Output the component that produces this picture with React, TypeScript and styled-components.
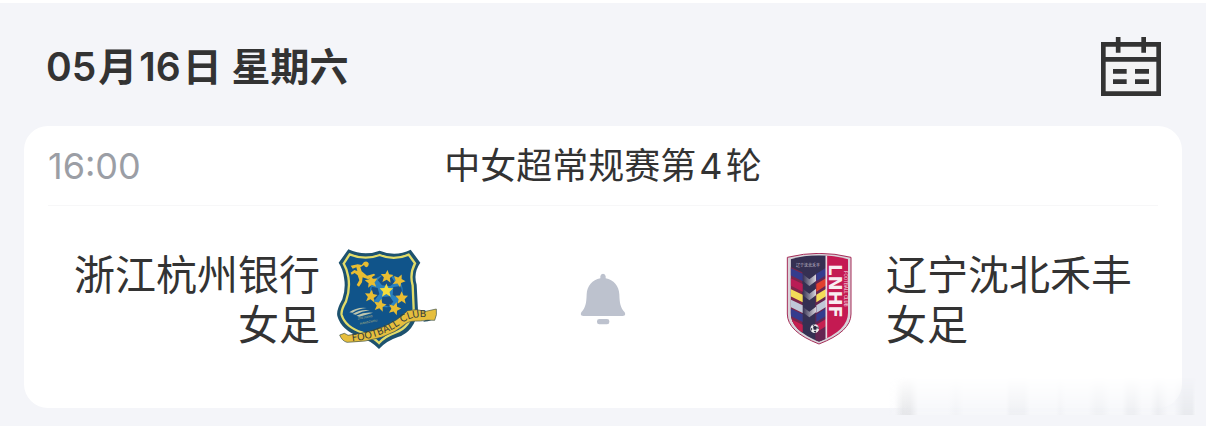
import React from "react";
import styled, { createGlobalStyle } from "styled-components";

const GlobalStyle = createGlobalStyle`
  * { box-sizing: border-box; }
  body {
    margin: 0;
    background: #f4f5f9;
    color: #333333;
    font-family: Inter, "Noto Sans CJK SC", sans-serif;
  }
`;

const Page = styled.main`
  position: relative;
  border-top: 3px solid #ffffff;
  padding: 0 24px 18px;
`;

const DayHeader = styled.header`
  display: flex;
  align-items: center;
  justify-content: space-between;
  height: 123px;
  padding: 4px 21px 0 20px;
`;

const DayTitle = styled.h1`
  margin: 0;
  font-size: 39px;
  line-height: 50px;
  font-weight: 600;
`;

const Numeral = styled.span<{ $gap: number }>`
  margin: 0 ${(p) => p.$gap}px;
`;

const IconButton = styled.button`
  display: flex;
  padding: 0;
  border: 0;
  background: none;
  cursor: pointer;
`;

const MatchCard = styled.section`
  padding: 0 24px;
  border-radius: 24px;
  background: #ffffff;
`;

const MatchInfo = styled.div`
  display: grid;
  grid-template-columns: 1fr auto 1fr;
  align-items: center;
  height: 80px;
  border-bottom: 1px solid #f7f7f8;
`;

const Kickoff = styled.time`
  font-size: 36px;
  line-height: 50px;
  color: #9b9ea5;
`;

const Competition = styled.h2`
  margin: 0;
  font-size: 36px;
  line-height: 50px;
  font-weight: 400;
`;

const Teams = styled.div`
  display: grid;
  grid-template-columns: 1fr 102px 330px 102px 1fr;
  align-items: center;
  justify-items: center;
  height: 202px;
  padding-bottom: 16px;
`;

const TeamName = styled.p<{ $side: "home" | "away" }>`
  width: 100%;
  margin: 0;
  padding: ${(p) => (p.$side === "home" ? "2px 16px 0 0" : "2px 0 0 16px")};
  text-align: ${(p) => (p.$side === "home" ? "right" : "left")};
  font-size: 41px;
  line-height: 50px;
`;

const Watermark = styled.div`
  position: absolute;
  right: 10px;
  bottom: 11px;
  width: 308px;
  height: 38px;
  background:
    linear-gradient(to right, transparent 0 7px, #d3d4d777 15px 22px, transparent 30px 60px, #e6e8ec44 68px, transparent 76px 118px, #e0e2e755 122px 136px, transparent 142px 168px, #e6e8ec44 172px, transparent 178px 200px, #e4e6ea55 208px 214px, transparent 222px 234px, #e0e2e666 240px 246px, transparent 254px 262px, #dcdee366 270px, transparent 280px 286px, #d8dbe077 296px 304px, transparent),
    linear-gradient(to right, transparent, #f6f7fa 20px);
  mask-image: linear-gradient(transparent, #000);
`;

const CalendarIcon = () => (
  <svg width="60" height="59" viewBox="0 0 180 177" aria-hidden="true">
    <path d="M7 22H173V170H7Z" fill="#f3f3f4" stroke="#333" strokeWidth="14" />
    <path
      d="M6 67H174M51.500 0V47M128 0V47M36 103H77M102 103H144M36 134H77M102 134H144"
      fill="none"
      stroke="#333"
      strokeWidth="14"
    />
  </svg>
);

const BellIcon = () => (
  <svg width="46" height="52" viewBox="30 24 138 156" aria-hidden="true">
    <path
      d="M91 40V34Q92 26 99 26Q106 26 107 34V40C131 44 147 63 148 88C149 116 151 127 164 142Q169 153 158 153H40Q29 153 34 142C47 127 49 116 50 88C51 63 67 44 91 40Z"
      fill="#bdc2ce"
    />
    <rect x="81" y="162" width="37" height="16" rx="7" fill="#bdc2ce" />
  </svg>
);

const STAR = "M0 -17L5 -6L17 -5L8 4L11 16L0 9L-11 16L-8 4L-17 -5L-5 -6Z";
const SMALL_STARS = [
  [186, 109, 5],
  [222, 121, 25],
  [139, 124, -8],
  [138, 168, 8],
  [165, 195, 12],
  [209, 205, 18],
  [230, 173, 0],
];

const HangzhouCrest = () => (
  <svg width="102" height="102" viewBox="33 24 306 306" role="img" aria-label="浙江杭州银行女足">
    <path
      d="M70 28Q118 50 164 32Q211 52 257 29L286 68Q264 99 275 134L279 212Q268 275 219 291Q183 303 162 327Q139 303 105 291Q49 271 37 228Q33 211 52 178Q63 145 57 113Q54 88 41 68Z"
      fill="#1d526f"
    />
    <path
      d="M74 43Q120 62 164 45Q207 63 251 44L270 70Q253 102 263 136L266 207Q256 262 211 278Q180 289 162 309Q141 289 112 278Q61 261 50 225Q47 212 63 184Q76 148 70 111Q66 87 56 71Z"
      fill="#10548a"
      stroke="#e2dc69"
      strokeWidth="7"
    />
    <circle cx="184" cy="153" r="49" fill="#2b82c0" />
    <path
      d="M173 105L195 105L210 127L195 139L171 136L158 120ZM140 140L158 144L163 162L150 180L137 168ZM205 141L228 138L232 159L219 173L203 164ZM172 171L194 169L205 185L191 200L169 192Z"
      fill="#164f86"
    />
    <path d={STAR} transform="translate(184 151) scale(1.2)" fill="#f3dc3d" />
    {SMALL_STARS.map(([x, y, angle]) => (
      <path key={`${x}-${y}`} d={STAR} transform={`translate(${x} ${y}) rotate(${angle}) scale(1.12)`} fill="#e8bd32" />
    ))}
    <path
      d="M117 66Q127 62 131 70Q132 79 124 82Q119 80 117 75L106 82L110 94L126 107L147 101L151 105L130 118L113 112L111 127L102 140L95 135L103 121L98 106L89 99L80 104L77 98L88 90L97 93L94 82L83 86L77 77L98 73L110 75Z"
      fill="#e8bd32"
    />
    <path d="M73 217Q96 200 125 204Q101 206 83 218ZM83 222Q107 207 134 211Q110 214 92 224ZM94 227Q118 215 144 218L103 230Z" fill="#bec6ad" />
    <g fill="#8b9c83" fontFamily="Inter, sans-serif" fontSize="9" fontStyle="italic" fontWeight="600">
      <text x="98" y="239" transform="rotate(-10 98 239)">ZHEJIANG</text>
      <text x="105" y="254" transform="rotate(-10 105 254)">HANGZHOU</text>
    </g>
    <path d="M286 242L330 227Q327 244 294 245L319 228L301 218Z" fill="#164763" />
    <path
      d="M44 285L58 280Q65 283 69 286Q188 273 248 212Q275 205 302 214L334 207Q337 224 329 241Q308 239 286 243Q255 242 244 250Q181 306 66 307Q51 303 44 285Z"
      fill="#e6be3d"
      stroke="#3c5148"
      strokeWidth="2"
    />
    <path id="ribbon-line" d="M82 304Q177 293 239 244Q268 227 316 232" fill="none" />
    <text fill="#38413c" fontFamily="'DejaVu Sans', sans-serif" fontSize="29">
      <textPath href="#ribbon-line">FOOTBALL CLUB</textPath>
    </text>
  </svg>
);

const CHEVRONS = [
  [68, "#343c8d", "#343c8d"],
  [99, "#b91c55", "#e0402f"],
  [131, "#f3dc58", "#f3dc58"],
  [163, "#c0c8d8", "#c0c8d8"],
  [190, "#343c8d", "#343c8d"],
  [221, "#c52050", "#c52050"],
] as const;

const ShenbeiCrest = () => (
  <svg width="66" height="92" viewBox="36 24 198 276" role="img" aria-label="辽宁沈北禾丰女足">
    <defs>
      <clipPath id="shield-field">
        <path d="M50 43Q89 31 135 31Q181 31 222 43V204Q222 256 135 290Q50 256 50 204Z" />
      </clipPath>
      <linearGradient id="silver">
        <stop stopColor="#fff" stopOpacity="0" />
        <stop offset="1" stopColor="#fff" stopOpacity=".8" />
      </linearGradient>
    </defs>
    <path
      d="M40 37Q89 25 135 25Q183 25 231 37V207Q231 260 135 297Q40 260 40 207Z"
      fill="#d9d4da"
      stroke="#a62c58"
      strokeWidth="3"
    />
    <g clipPath="url(#shield-field)">
      <path d="M48 28H157V292H48Z" fill="#353052" />
      <path d="M48 65L85 82V280L48 252Z" fill="#7c254a" />
      <path d="M124 90L155 68V292H124Z" fill="#652551" />
      {CHEVRONS.map(([y, left, right]) => (
        <React.Fragment key={y}>
          <path d={`M48 ${y}L86 ${y + 18}V${y + 41}L48 ${y + 22}Z`} fill={left} />
          <path d={`M127 ${y + 18}L157 ${y}V${y + 22}L127 ${y + 41}Z`} fill={right} />
        </React.Fragment>
      ))}
      <path
        d="M86 87L106 103L126 88V108L106 123L86 107ZM86 131L106 146L126 131V151L106 166L86 151ZM86 185L106 200L126 185V202L106 217L86 202Z"
        fill="url(#silver)"
      />
      <path d="M157 28H226V280H157Z" fill="#c41a52" />
      <path d="M157 28V292" stroke="#e9d7df" strokeWidth="5" />
    </g>
    <text x="66" y="67" fill="#cdc4d2" fontFamily="'Noto Sans CJK SC', sans-serif" fontSize="12">辽宁沈北禾丰</text>
    <text
      transform="translate(166 57) rotate(90)"
      fill="#f8edf1"
      fontFamily="'DejaVu Sans', sans-serif"
      fontSize="54"
      fontWeight="700"
    >
      LNHF
    </text>
    <text
      transform="translate(209 78) rotate(90)"
      fill="#eab7c8"
      fontFamily="Inter, sans-serif"
      fontSize="13"
      fontWeight="600"
    >
      FOOTBALL CLUB
    </text>
    <circle cx="122" cy="251" r="13" fill="#eeeeef" />
    <path
      d="M117 245L123 242L129 246L127 254H119ZM110 248L115 251L113 258ZM132 243L135 252L129 250ZM119 258L127 257L124 264ZM115 240L123 238L119 243Z"
      fill="#26253b"
    />
  </svg>
);

export default function App() {
  return (
    <>
      <GlobalStyle />
      <Page>
        <DayHeader>
          <DayTitle>
            <Numeral $gap={2}>05</Numeral>月<Numeral $gap={2}>16</Numeral>日 星期六
          </DayTitle>
          <IconButton type="button" aria-label="日历">
            <CalendarIcon />
          </IconButton>
        </DayHeader>
        <MatchCard>
          <MatchInfo>
            <Kickoff>16:00</Kickoff>
            <Competition>
              中女超常规赛第<Numeral $gap={3}>4</Numeral>轮
            </Competition>
          </MatchInfo>
          <Teams>
            <TeamName $side="home">浙江杭州银行女足</TeamName>
            <HangzhouCrest />
            <IconButton type="button" aria-label="提醒">
              <BellIcon />
            </IconButton>
            <ShenbeiCrest />
            <TeamName $side="away">辽宁沈北禾丰女足</TeamName>
          </Teams>
        </MatchCard>
        <Watermark />
      </Page>
    </>
  );
}
